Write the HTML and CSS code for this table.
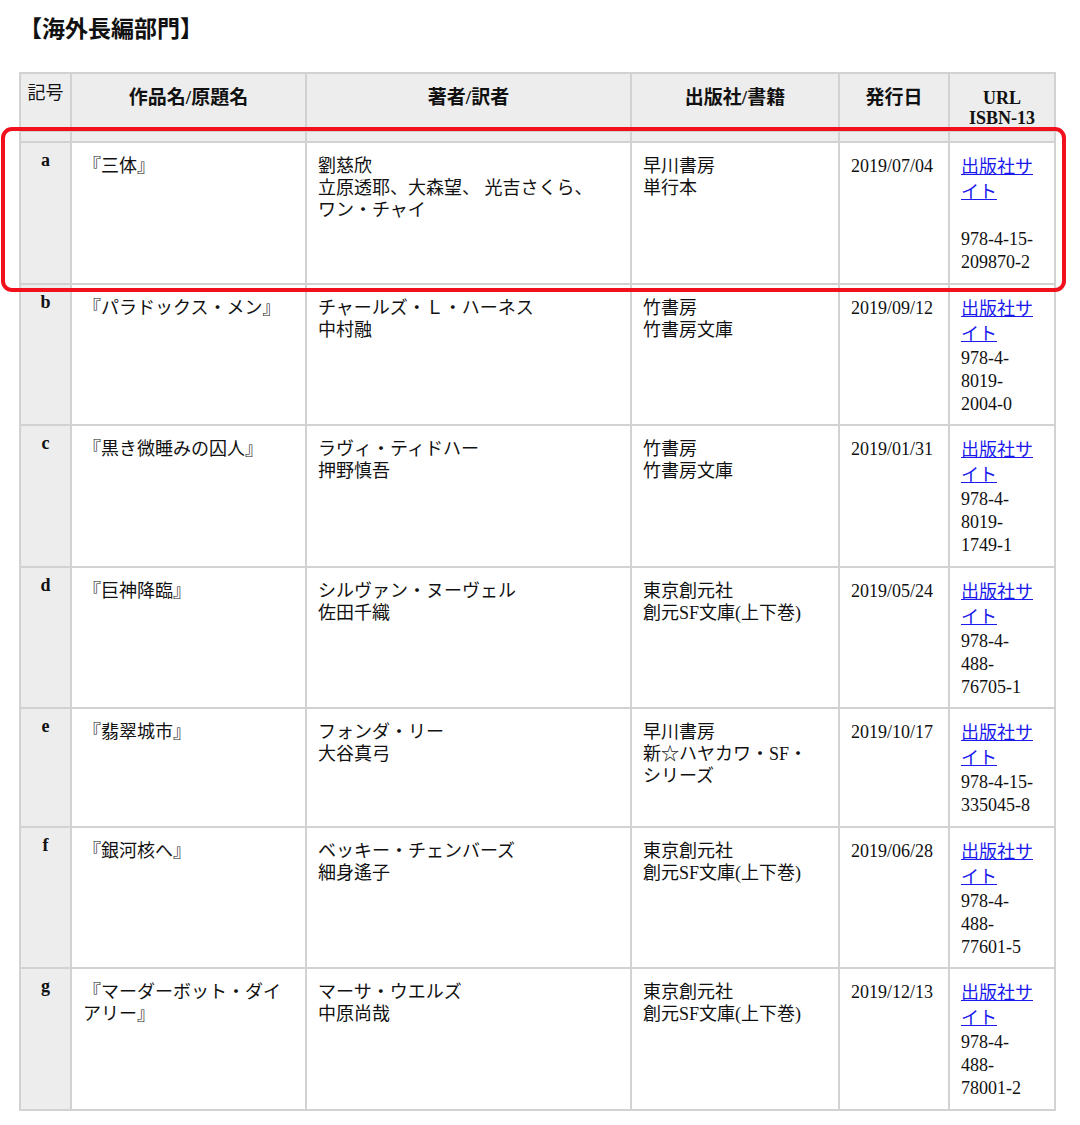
FILE: index.html
```html
<!DOCTYPE html>
<html lang="ja">
<head>
<meta charset="utf-8">
<title>海外長編部門</title>
<link rel="stylesheet" href="styles.css">
</head>
<body>
<div class="page">
  <h2 class="title">【海外長編部門】</h2>
  <div class="wrap">
    <table class="awards">
      <colgroup>
        <col class="c-mark"><col class="c-title"><col class="c-author"><col class="c-pub"><col class="c-date"><col class="c-url">
      </colgroup>
      <thead>
        <tr>
          <th class="h-mark">記号</th>
          <th>作品名/原題名</th>
          <th>著者/訳者</th>
          <th>出版社/書籍</th>
          <th>発行日</th>
          <th class="h-url">URL<br>ISBN-13</th>
        </tr>
      </thead>
      <tbody>
        <tr class="spacer"><td></td><td></td><td></td><td></td><td></td><td></td></tr>
        <tr>
          <td class="mark">a</td>
          <td>『三体』</td>
          <td>劉慈欣<br>立原透耶、大森望、 光吉さくら、<br>ワン・チャイ</td>
          <td>早川書房<br>単行本</td>
          <td>2019/07/04</td>
          <td class="url"><a href="#">出版社サイト</a><div class="isbn gap">978-4-15-209870-2</div></td>
        </tr>
        <tr>
          <td class="mark">b</td>
          <td>『パラドックス・メン』</td>
          <td>チャールズ・Ｌ・ハーネス<br>中村融</td>
          <td>竹書房<br>竹書房文庫</td>
          <td>2019/09/12</td>
          <td class="url"><a href="#">出版社サイト</a><div class="isbn">978-4-8019-2004-0</div></td>
        </tr>
        <tr>
          <td class="mark">c</td>
          <td>『黒き微睡みの囚人』</td>
          <td>ラヴィ・ティドハー<br>押野慎吾</td>
          <td>竹書房<br>竹書房文庫</td>
          <td>2019/01/31</td>
          <td class="url"><a href="#">出版社サイト</a><div class="isbn">978-4-8019-1749-1</div></td>
        </tr>
        <tr>
          <td class="mark">d</td>
          <td>『巨神降臨』</td>
          <td>シルヴァン・ヌーヴェル<br>佐田千織</td>
          <td>東京創元社<br>創元SF文庫(上下巻)</td>
          <td>2019/05/24</td>
          <td class="url"><a href="#">出版社サイト</a><div class="isbn">978-4-488-76705-1</div></td>
        </tr>
        <tr>
          <td class="mark">e</td>
          <td>『翡翠城市』</td>
          <td>フォンダ・リー<br>大谷真弓</td>
          <td>早川書房<br>新☆ハヤカワ・SF・<br>シリーズ</td>
          <td>2019/10/17</td>
          <td class="url"><a href="#">出版社サイト</a><div class="isbn">978-4-15-335045-8</div></td>
        </tr>
        <tr>
          <td class="mark">f</td>
          <td>『銀河核へ』</td>
          <td>ベッキー・チェンバーズ<br>細身遙子</td>
          <td>東京創元社<br>創元SF文庫(上下巻)</td>
          <td>2019/06/28</td>
          <td class="url"><a href="#">出版社サイト</a><div class="isbn">978-4-488-77601-5</div></td>
        </tr>
        <tr>
          <td class="mark">g</td>
          <td>『マーダーボット・ダイアリー』</td>
          <td>マーサ・ウエルズ<br>中原尚哉</td>
          <td>東京創元社<br>創元SF文庫(上下巻)</td>
          <td>2019/12/13</td>
          <td class="url"><a href="#">出版社サイト</a><div class="isbn">978-4-488-78001-2</div></td>
        </tr>
      </tbody>
    </table>
    <div class="highlight"></div>
  </div>
</div>
</body>
</html>
```

FILE: styles.css
```css
html, body {
  margin: 0;
  padding: 0;
  background: #ffffff;
}
body {
  font-family: "Liberation Serif", "Noto Sans CJK JP", serif;
  color: #111111;
  font-size: 18px;
}
.page {
  padding: 0 0 0 19px;
}
.title {
  margin: 16px 0 28px 0;
  font-size: 23px;
  line-height: 28px;
  font-weight: bold;
}
.wrap {
  position: relative;
}
.awards {
  border-collapse: collapse;
  table-layout: fixed;
  width: 1037px;
  border: 2px solid #d2d2d2;
}
.c-mark { width: 51px; }
.c-title { width: 235px; }
.c-author { width: 325px; }
.c-pub { width: 208px; }
.c-date { width: 110px; }
.c-url { width: 106px; }

.awards th,
.awards td {
  border: 2px solid #d2d2d2;
  vertical-align: top;
}
.awards th {
  background: #ededed;
  font-size: 19px;
  font-weight: bold;
  text-align: center;
  line-height: 20px;
  padding: 14px 6px 2px;
}
.awards th.h-mark {
  font-size: 18px;
  font-weight: normal;
  padding-top: 9px;
}
.awards th.h-url {
  font-size: 18px;
}
.awards td {
  padding: 12px 14px 8.5px 11px;
  line-height: 22px;
  background: #ffffff;
}
.awards tr.spacer td {
  height: 9px;
  padding: 0;
  background: #ededed;
}
.awards td.mark {
  background: #ededed;
  font-weight: bold;
  text-align: center;
  padding: 6px 4px 0;
}
.url a {
  display: block;
  line-height: 25px;
  color: #1a1aee;
  text-decoration: underline;
}
.isbn {
  line-height: 23px;
}
.isbn.gap {
  margin-top: 23px;
}
.highlight {
  position: absolute;
  left: -18px;
  top: 55px;
  width: 1057px;
  height: 157px;
  border: 4px solid #f2101c;
  border-radius: 11px;
  pointer-events: none;
}
```
